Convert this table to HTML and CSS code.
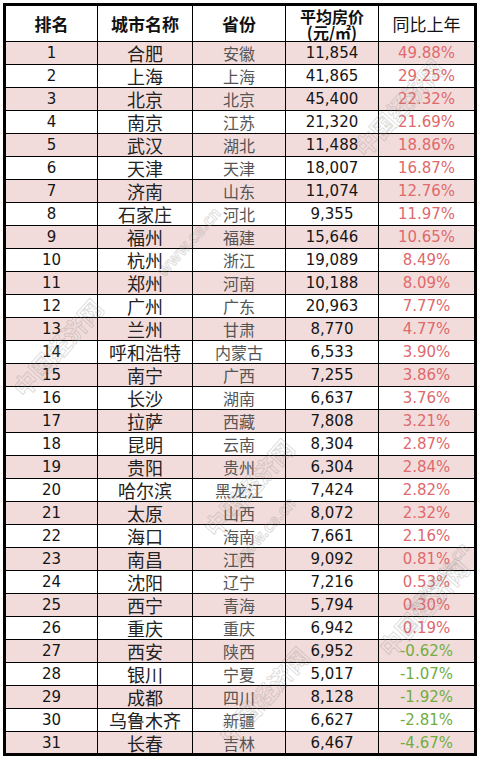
FILE: index.html
```html
<!DOCTYPE html>
<html lang="zh">
<head>
<meta charset="utf-8">
<title>城市平均房价</title>
<link rel="stylesheet" href="styles.css">
</head>
<body>
<div class="sheet">
<table class="prices">
<colgroup>
<col class="c1"><col class="c2"><col class="c3"><col class="c4"><col class="c5">
</colgroup>
<thead>
<tr class="head">
<th>排名</th><th>城市名称</th><th>省份</th><th class="two">平均房价<br>(元/㎡)</th><th class="light">同比上年</th>
</tr>
</thead>
<tbody>
<tr class="pk"><td class="n">1</td><td class="city">合肥</td><td class="prov">安徽</td><td class="n">11,854</td><td class="up">49.88%</td></tr>
<tr><td class="n">2</td><td class="city">上海</td><td class="prov">上海</td><td class="n">41,865</td><td class="up">29.25%</td></tr>
<tr class="pk"><td class="n">3</td><td class="city">北京</td><td class="prov">北京</td><td class="n">45,400</td><td class="up">22.32%</td></tr>
<tr><td class="n">4</td><td class="city">南京</td><td class="prov">江苏</td><td class="n">21,320</td><td class="up">21.69%</td></tr>
<tr class="pk"><td class="n">5</td><td class="city">武汉</td><td class="prov">湖北</td><td class="n">11,488</td><td class="up">18.86%</td></tr>
<tr><td class="n">6</td><td class="city">天津</td><td class="prov">天津</td><td class="n">18,007</td><td class="up">16.87%</td></tr>
<tr class="pk"><td class="n">7</td><td class="city">济南</td><td class="prov">山东</td><td class="n">11,074</td><td class="up">12.76%</td></tr>
<tr><td class="n">8</td><td class="city">石家庄</td><td class="prov">河北</td><td class="n">9,355</td><td class="up">11.97%</td></tr>
<tr class="pk"><td class="n">9</td><td class="city">福州</td><td class="prov">福建</td><td class="n">15,646</td><td class="up">10.65%</td></tr>
<tr><td class="n">10</td><td class="city">杭州</td><td class="prov">浙江</td><td class="n">19,089</td><td class="up">8.49%</td></tr>
<tr class="pk"><td class="n">11</td><td class="city">郑州</td><td class="prov">河南</td><td class="n">10,188</td><td class="up">8.09%</td></tr>
<tr><td class="n">12</td><td class="city">广州</td><td class="prov">广东</td><td class="n">20,963</td><td class="up">7.77%</td></tr>
<tr class="pk"><td class="n">13</td><td class="city">兰州</td><td class="prov">甘肃</td><td class="n">8,770</td><td class="up">4.77%</td></tr>
<tr><td class="n">14</td><td class="city">呼和浩特</td><td class="prov">内蒙古</td><td class="n">6,533</td><td class="up">3.90%</td></tr>
<tr class="pk"><td class="n">15</td><td class="city">南宁</td><td class="prov">广西</td><td class="n">7,255</td><td class="up">3.86%</td></tr>
<tr><td class="n">16</td><td class="city">长沙</td><td class="prov">湖南</td><td class="n">6,637</td><td class="up">3.76%</td></tr>
<tr class="pk"><td class="n">17</td><td class="city">拉萨</td><td class="prov">西藏</td><td class="n">7,808</td><td class="up">3.21%</td></tr>
<tr><td class="n">18</td><td class="city">昆明</td><td class="prov">云南</td><td class="n">8,304</td><td class="up">2.87%</td></tr>
<tr class="pk"><td class="n">19</td><td class="city">贵阳</td><td class="prov">贵州</td><td class="n">6,304</td><td class="up">2.84%</td></tr>
<tr><td class="n">20</td><td class="city">哈尔滨</td><td class="prov">黑龙江</td><td class="n">7,424</td><td class="up">2.82%</td></tr>
<tr class="pk"><td class="n">21</td><td class="city">太原</td><td class="prov">山西</td><td class="n">8,072</td><td class="up">2.32%</td></tr>
<tr><td class="n">22</td><td class="city">海口</td><td class="prov">海南</td><td class="n">7,661</td><td class="up">2.16%</td></tr>
<tr class="pk"><td class="n">23</td><td class="city">南昌</td><td class="prov">江西</td><td class="n">9,092</td><td class="up">0.81%</td></tr>
<tr><td class="n">24</td><td class="city">沈阳</td><td class="prov">辽宁</td><td class="n">7,216</td><td class="up">0.53%</td></tr>
<tr class="pk"><td class="n">25</td><td class="city">西宁</td><td class="prov">青海</td><td class="n">5,794</td><td class="up">0.30%</td></tr>
<tr><td class="n">26</td><td class="city">重庆</td><td class="prov">重庆</td><td class="n">6,942</td><td class="up">0.19%</td></tr>
<tr class="pk"><td class="n">27</td><td class="city">西安</td><td class="prov">陕西</td><td class="n">6,952</td><td class="down">-0.62%</td></tr>
<tr><td class="n">28</td><td class="city">银川</td><td class="prov">宁夏</td><td class="n">5,017</td><td class="down">-1.07%</td></tr>
<tr class="pk"><td class="n">29</td><td class="city">成都</td><td class="prov">四川</td><td class="n">8,128</td><td class="down">-1.92%</td></tr>
<tr><td class="n">30</td><td class="city">乌鲁木齐</td><td class="prov">新疆</td><td class="n">6,627</td><td class="down">-2.81%</td></tr>
<tr class="pk"><td class="n">31</td><td class="city">长春</td><td class="prov">吉林</td><td class="n">6,467</td><td class="down">-4.67%</td></tr>
</tbody>
</table>
<span class="wm big wm1">中国经济网</span>
<span class="wm small wm2">www.ce.cn</span>
<span class="wm big wm3">中国经济网</span>
<span class="wm big wm4">中国经济网</span>
<span class="wm small wm5">www.ce.cn</span>
<span class="wm big wm6">中国经济网</span>
<span class="wm small wm7">www.ce.cn</span>
<span class="wm big wm8">中国经济网</span>
</div>
</body>
</html>
```
FILE: styles.css
```css
html, body {
  margin: 0;
  padding: 0;
  background: #ffffff;
}

.sheet {
  position: relative;
  width: 482px;
  height: 762px;
  overflow: hidden;
  padding: 3px 0 0 3px;
  box-sizing: border-box;
}

.prices {
  border-collapse: collapse;
  table-layout: fixed;
  width: 474px;
  border: 3px solid #000;
  font-family: "DejaVu Sans", "Noto Sans CJK SC", sans-serif;
  color: #111;
}

.c1 { width: 93px; }
.c2 { width: 95px; }
.c3 { width: 93px; }
.c4 { width: 93px; }
.c5 { width: 97px; }

.prices th,
.prices td {
  border: 1px solid #000;
  padding: 0;
  text-align: center;
  vertical-align: middle;
  white-space: nowrap;
}

.head {
  height: 37px;
}

.prices th {
  font-family: "Noto Sans CJK SC", sans-serif;
  font-size: 17px;
  font-weight: 700;
  line-height: 18px;
  color: #111;
}

.prices th.two {
  font-size: 16px;
  line-height: 16px;
}

.prices th.light {
  font-weight: 400;
}

.prices tbody tr {
  height: 23px;
}

.pk {
  background: #f2dcdb;
}

.n {
  font-size: 15px;
  line-height: 20px;
  color: #151515;
}

.city {
  font-family: "Noto Sans CJK SC", sans-serif;
  font-size: 18px;
  line-height: 20px;
  color: #222;
}

.prov {
  font-family: "Noto Sans CJK SC", sans-serif;
  font-size: 16px;
  line-height: 20px;
  color: #555;
}

.up {
  font-size: 15px;
  line-height: 20px;
  color: #e0696c;
}

.down {
  font-size: 15px;
  line-height: 20px;
  color: #72ad3f;
}

.wm {
  position: absolute;
  font-family: "Noto Sans CJK SC", sans-serif;
  font-weight: 700;
  color: transparent;
  -webkit-text-stroke: 1px rgba(140, 140, 140, 0.3);
  transform: rotate(-48deg);
  transform-origin: left top;
  white-space: nowrap;
  pointer-events: none;
}

.big { font-size: 24px; }
.small { font-size: 16px; }

.wm1 { left: 345px; top: 140px; }
.wm2 { left: 150px; top: 265px; }
.wm3 { left: 4px; top: 380px; }
.wm4 { left: 195px; top: 520px; }
.wm5 { left: 225px; top: 555px; }
.wm6 { left: 370px; top: 640px; }
.wm7 { left: 398px; top: 600px; }
.wm8 { left: 210px; top: 728px; }
```
